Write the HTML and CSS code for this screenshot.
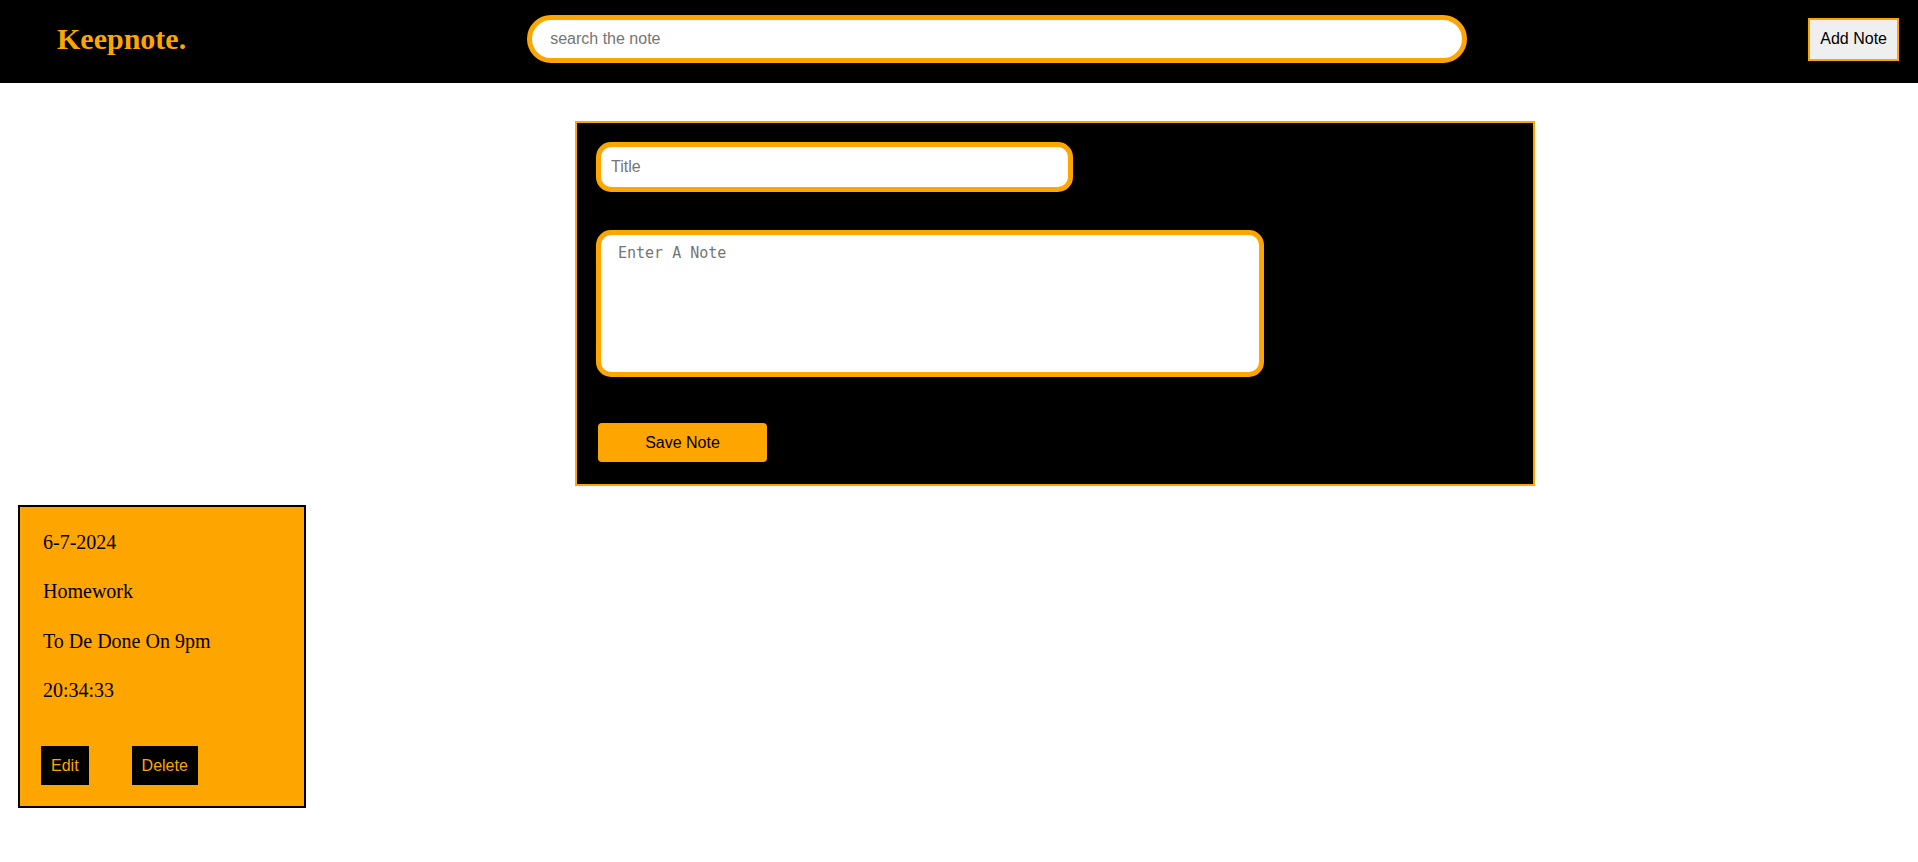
FILE: index.html
```html
<!DOCTYPE html>
<html lang="en">
<head>
<meta charset="utf-8">
<title>Keepnote</title>
<link rel="stylesheet" href="styles.css">
</head>
<body>
<header class="topbar">
  <h1 class="logo">Keepnote.</h1>
  <input class="search" type="text" placeholder="search the note">
  <button class="add-btn">Add Note</button>
</header>
<main class="page">
  <section class="note-form">
    <input class="title-input" type="text" placeholder="Title">
    <textarea class="note-input" placeholder="Enter A Note"></textarea>
    <button class="save-btn">Save Note</button>
  </section>
  <section class="notes">
    <article class="note-card">
      <p>6-7-2024</p>
      <p>Homework</p>
      <p>To De Done On 9pm</p>
      <p>20:34:33</p>
      <div class="card-actions">
        <button class="card-btn">Edit</button>
        <button class="card-btn">Delete</button>
      </div>
    </article>
  </section>
</main>
</body>
</html>
```
FILE: styles.css
```css
* { box-sizing: border-box; }

body {
  margin: 0;
  background: #fff;
  font-family: "Liberation Serif", "Times New Roman", serif;
}

.topbar {
  height: 83px;
  background: #000;
  display: flex;
  align-items: center;
  justify-content: space-between;
  padding: 0 19px 5px 57px;
}

.logo {
  margin: 0;
  font-family: "Liberation Serif", "Times New Roman", serif;
  font-weight: bold;
  font-size: 30px;
  color: #ffa500;
}

.search {
  width: 940px;
  height: 48px;
  border: 5px solid #ffa500;
  border-radius: 30px;
  padding: 0 0 0 18px;
  font-family: "Liberation Sans", Arial, sans-serif;
  font-size: 16px;
  color: #000;
  background: #fff;
  outline: none;
}
.search::placeholder { color: #757575; }

.add-btn {
  height: 43px;
  padding: 0 10px;
  border: 2px solid #ffa500;
  background: #efefef;
  color: #000;
  font-family: "Liberation Sans", Arial, sans-serif;
  font-size: 16px;
  border-radius: 0;
}

.page {
  padding-top: 38px;
}

.note-form {
  width: 960px;
  margin-left: 575px;
  background: #000;
  border: 2px solid #ffa500;
  padding: 19px 19px 22px 19px;
  display: flex;
  flex-direction: column;
  align-items: flex-start;
}

.title-input {
  width: 477px;
  height: 50px;
  border: 5px solid #ffa500;
  border-radius: 15px;
  padding: 0 10px;
  font-family: "Liberation Sans", Arial, sans-serif;
  font-size: 16px;
  background: #fff;
  outline: none;
}
.title-input::placeholder { color: #757575; }

.note-input {
  width: 668px;
  height: 147px;
  margin-top: 38px;
  border: 5px solid #ffa500;
  border-radius: 15px;
  padding: 9px 17px;
  font-family: "DejaVu Sans Mono", "Liberation Mono", monospace;
  font-size: 15px;
  resize: none;
  background: #fff;
  outline: none;
}
.note-input::placeholder { color: #757575; }

.save-btn {
  width: 169px;
  height: 39px;
  margin: 46px 0 0 2px;
  border: none;
  border-radius: 4px;
  background: #ffa500;
  color: #000;
  font-family: "Liberation Sans", Arial, sans-serif;
  font-size: 16px;
}

.notes {
  padding: 19px 0 0 18px;
}

.note-card {
  width: 288px;
  background: #ffa500;
  border: 2px solid #000;
  padding: 0 0 0 23px;
  overflow: hidden;
}

.note-card p {
  margin: 19.5px 0;
  font-size: 20px;
  line-height: 30px;
  color: #000;
}

.card-actions {
  display: flex;
  gap: 43px;
  margin: 41px 0 21px -2px;
}

.card-btn {
  height: 39px;
  padding: 0 10px;
  border: none;
  border-radius: 0;
  background: #000;
  color: #ffa500;
  font-family: "Liberation Sans", Arial, sans-serif;
  font-size: 16px;
}
```
